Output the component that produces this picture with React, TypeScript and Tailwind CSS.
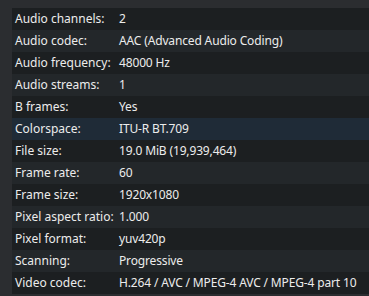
import React from "react";

const rows: [string, string][] = [
  ["Audio channels:", "2"],
  ["Audio codec:", "AAC (Advanced Audio Coding)"],
  ["Audio frequency:", "48000 Hz"],
  ["Audio streams:", "1"],
  ["B frames:", "Yes"],
  ["Colorspace:", "ITU-R BT.709"],
  ["File size:", "19.0 MiB (19,939,464)"],
  ["Frame rate:", "60"],
  ["Frame size:", "1920x1080"],
  ["Pixel aspect ratio:", "1.000"],
  ["Pixel format:", "yuv420p"],
  ["Scanning:", "Progressive"],
  ["Video codec:", "H.264 / AVC / MPEG-4 AVC / MPEG-4 part 10"],
];

export default function App() {
  return (
    <div
      className="w-[369px] h-[296px] bg-[#2b2d30] pt-[8px] pl-[12px] overflow-hidden text-[12px] text-[#ececec]"
      style={{ fontFamily: '"Noto Sans", "Open Sans", sans-serif' }}
    >
      <div className="flex flex-col">
        {rows.map(([k, v], i) => {
          const bg =
            i === 5 ? "bg-[#1f2b37]" : i % 2 === 0 ? "bg-[#1c1f21]" : "bg-[#23272a]";
          return (
            <div key={k} className={`flex h-[22px] items-center ${bg}`}>
              <div className="w-[104px] pl-[3px] whitespace-nowrap">{k}</div>
              <div className="pl-[3px] whitespace-nowrap tracking-[-0.15px]">{v}</div>
            </div>
          );
        })}
      </div>
    </div>
  );
}
